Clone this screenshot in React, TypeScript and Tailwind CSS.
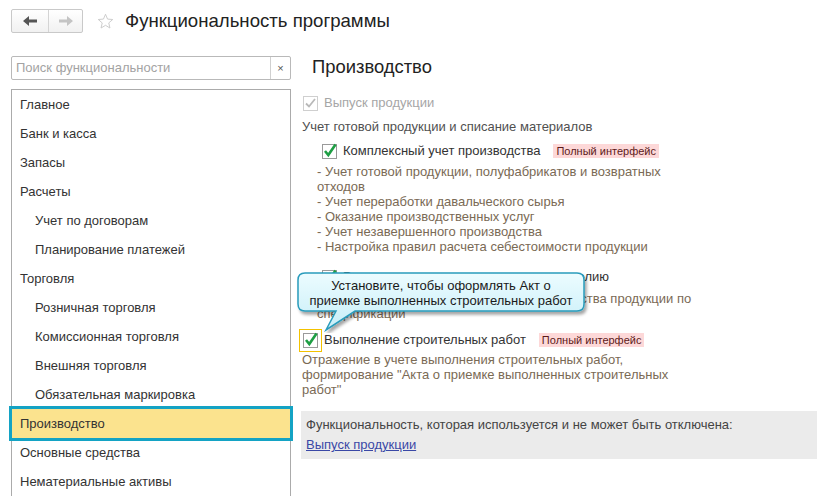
import React from "react";

const sections = [
  { label: "Главное", sub: false },
  { label: "Банк и касса", sub: false },
  { label: "Запасы", sub: false },
  { label: "Расчеты", sub: false },
  { label: "Учет по договорам", sub: true },
  { label: "Планирование платежей", sub: true },
  { label: "Торговля", sub: false },
  { label: "Розничная торговля", sub: true },
  { label: "Комиссионная торговля", sub: true },
  { label: "Внешняя торговля", sub: true },
  { label: "Обязательная маркировка", sub: true },
  { label: "Производство", sub: false, active: true },
  { label: "Основные средства", sub: false },
  { label: "Нематериальные активы", sub: false },
];

const complexLines = [
  "- Учет готовой продукции, полуфабрикатов и возвратных отходов",
  "- Учет переработки давальческого сырья",
  "- Оказание производственных услуг",
  "- Учет незавершенного производства",
  "- Настройка правил расчета себестоимости продукции",
];

function CheckBox({ disabled = false }: { disabled?: boolean }) {
  return (
    <span
      className={`relative inline-block h-[15px] w-[15px] shrink-0 border bg-white ${
        disabled ? "border-[#cfcfcf]" : "border-[#9a9a9a]"
      }`}
    >
      <svg className="absolute -left-px -top-px overflow-visible" width="15" height="15" viewBox="0 0 15 15">
        {disabled ? (
          <path d="M3 7.5 L6 10.5 L12 3" fill="none" stroke="#b9b9b9" strokeWidth="1.8" />
        ) : (
          <path d="M3 7 L6.3 11 L13.5 0.5" fill="none" stroke="#1e9e44" strokeWidth="2.6" />
        )}
      </svg>
    </span>
  );
}

function Badge() {
  return (
    <span className="ml-[7px] bg-[#fdd8d8] px-[3px] text-[11px] leading-[14px] text-[#5c1a1a]">
      Полный интерфейс
    </span>
  );
}

export default function App() {
  return (
    <div className="relative h-[496px] w-[817px] overflow-hidden bg-white font-['Liberation_Sans',Arial,sans-serif] text-[13px] text-[#333]">
      {/* header */}
      <div className="flex h-[42px] items-center pl-[11px]">
        <div className="flex h-[24px] w-[72px] rounded-[2px] border border-[#c9c9c9] bg-gradient-to-b from-white to-[#f1f1f1]">
          <div className="flex w-[37px] items-center justify-center border-r border-[#d4d4d4]">
            <svg width="14" height="10" viewBox="0 0 14 10">
              <path d="M0 5 L6 0 V3.4 H14 V6.6 H6 V10 Z" fill="#555" />
            </svg>
          </div>
          <div className="flex flex-1 items-center justify-center">
            <svg width="14" height="10" viewBox="0 0 14 10">
              <path d="M14 5 L8 0 V3.4 H0 V6.6 H8 V10 Z" fill="#c4c4c4" />
            </svg>
          </div>
        </div>
        <svg className="ml-[14px]" width="17" height="17" viewBox="0 0 24 24">
          <path
            d="M12 1.8 L14.9 8.6 L22.2 9.2 L16.6 14 L18.3 21.2 L12 17.4 L5.7 21.2 L7.4 14 L1.8 9.2 L9.1 8.6 Z"
            fill="none"
            stroke="#c8c8c8"
            strokeWidth="1.3"
            strokeLinejoin="round"
          />
        </svg>
        <span className="ml-[11px] text-[18.6px] leading-[22px] text-[#222]">Функциональность программы</span>
      </div>

      <div className="flex">
        {/* left column */}
        <div className="w-[291px] shrink-0 pl-[11px] pt-[14px]">
          <div className="flex h-[24px] w-[280px] rounded-[2px] border border-[#b9b9b9]">
            <span className="flex-1 pl-[4px] text-[13px] leading-[22px] text-[#a3a3a3]">Поиск функциональности</span>
            <span className="flex w-[20px] items-center justify-center border-l border-[#d0d0d0] text-[11px] text-[#555]">
              ×
            </span>
          </div>
          <div className="mt-[9px] h-[420px] w-[280px] border-x border-t border-[#ababab]">
            {sections.map((s) => (
              <div
                key={s.label}
                className={`flex h-[29px] items-center ${s.sub ? "pl-[23px]" : "pl-[8px]"} ${
                  s.active ? "bg-[#fbe38e] outline-[3px] outline-[#14a3c4] outline-solid" : ""
                }`}
              >
                {s.label}
              </div>
            ))}
          </div>
        </div>

        {/* right pane */}
        <div className="flex-1 pt-[14px] pl-[11px]">
          <div className="pl-[10px] text-[18.4px] leading-[22px] text-[#222]">Производство</div>

          <div className="mt-[15px] ml-[1px] flex h-[20px] items-center gap-[6px] text-[#a6a6a6]">
            <CheckBox disabled />
            <span>Выпуск продукции</span>
          </div>
          <div className="mt-[6px] leading-[16px] text-[#505050]">Учет готовой продукции и списание материалов</div>

          <div className="mt-[6px] ml-[20px] flex h-[20px] items-center gap-[6px]">
            <CheckBox />
            <span>Комплексный учет производства</span>
            <Badge />
          </div>
          <div className="mt-[3px] ml-[15px] w-[383px] leading-[15px] text-[#7a6a55]">
            {complexLines.map((l) => (
              <div key={l}>{l}</div>
            ))}
          </div>

          <div className="mt-[13px] ml-[20px] flex h-[20px] items-center gap-[6px]">
            <CheckBox />
            <span>Расчет материальных расходов по изделию</span>
          </div>
          <div className="mt-[4px] ml-[15px] w-[383px] leading-[15px] text-[#7a6a55]">
            Учет по плановым нормам затрат производства продукции по спецификации
          </div>

          <div className="mt-[9px] ml-[1px] flex h-[20px] items-center gap-[6px]">
            <span className="relative flex">
              <CheckBox />
              <span className="absolute -inset-[4px] border-[1.5px] border-[#f3c200]" />
            </span>
            <span>Выполнение строительных работ</span>
            <Badge />
          </div>
          <div className="mt-[2px] w-[398px] leading-[15px] text-[#7a6a55]">
            Отражение в учете выполнения строительных работ, формирование "Акта о приемке выполненных строительных работ"
          </div>

          <div className="mt-[14px] -ml-px h-[48px] bg-[#ebebeb] pl-[5px] pt-[6px]">
            <div className="leading-[16px] text-[#444]">Функциональность, которая используется и не может быть отключена:</div>
            <div className="mt-[4px] leading-[16px]">
              <span className="text-[#3a48a6] underline">Выпуск продукции</span>
            </div>
          </div>
        </div>
      </div>

      {/* tooltip callout */}
      <div className="absolute left-[296px] top-[271px] h-[62px] w-[294px]">
        <svg className="absolute inset-0" width="294" height="62" viewBox="0 0 294 62">
          <defs>
            <linearGradient id="tipFill" x1="0" y1="0" x2="0" y2="1">
              <stop offset="0" stopColor="#ecfcff" />
              <stop offset="1" stopColor="#c7eef8" />
            </linearGradient>
            <filter id="tipShadow" x="-10%" y="-20%" width="120%" height="150%">
              <feDropShadow dx="2" dy="3" stdDeviation="1.6" floodColor="#000" floodOpacity="0.35" />
            </filter>
          </defs>
          <path
            d="M9 2 H281 Q288 2 288 9 V33 Q288 40 281 40 H59 L30 59 L40 40 H9 Q2 40 2 33 V9 Q2 2 9 2 Z"
            fill="url(#tipFill)"
            stroke="#2a9cbc"
            strokeWidth="1.5"
            filter="url(#tipShadow)"
          />
        </svg>
        <div className="absolute left-[2px] top-[7px] w-[286px] text-center leading-[15px] text-[#1a1a1a]">
          Установите, чтобы оформлять Акт о
          <br />
          приемке выполненных строительных работ
        </div>
      </div>
    </div>
  );
}
